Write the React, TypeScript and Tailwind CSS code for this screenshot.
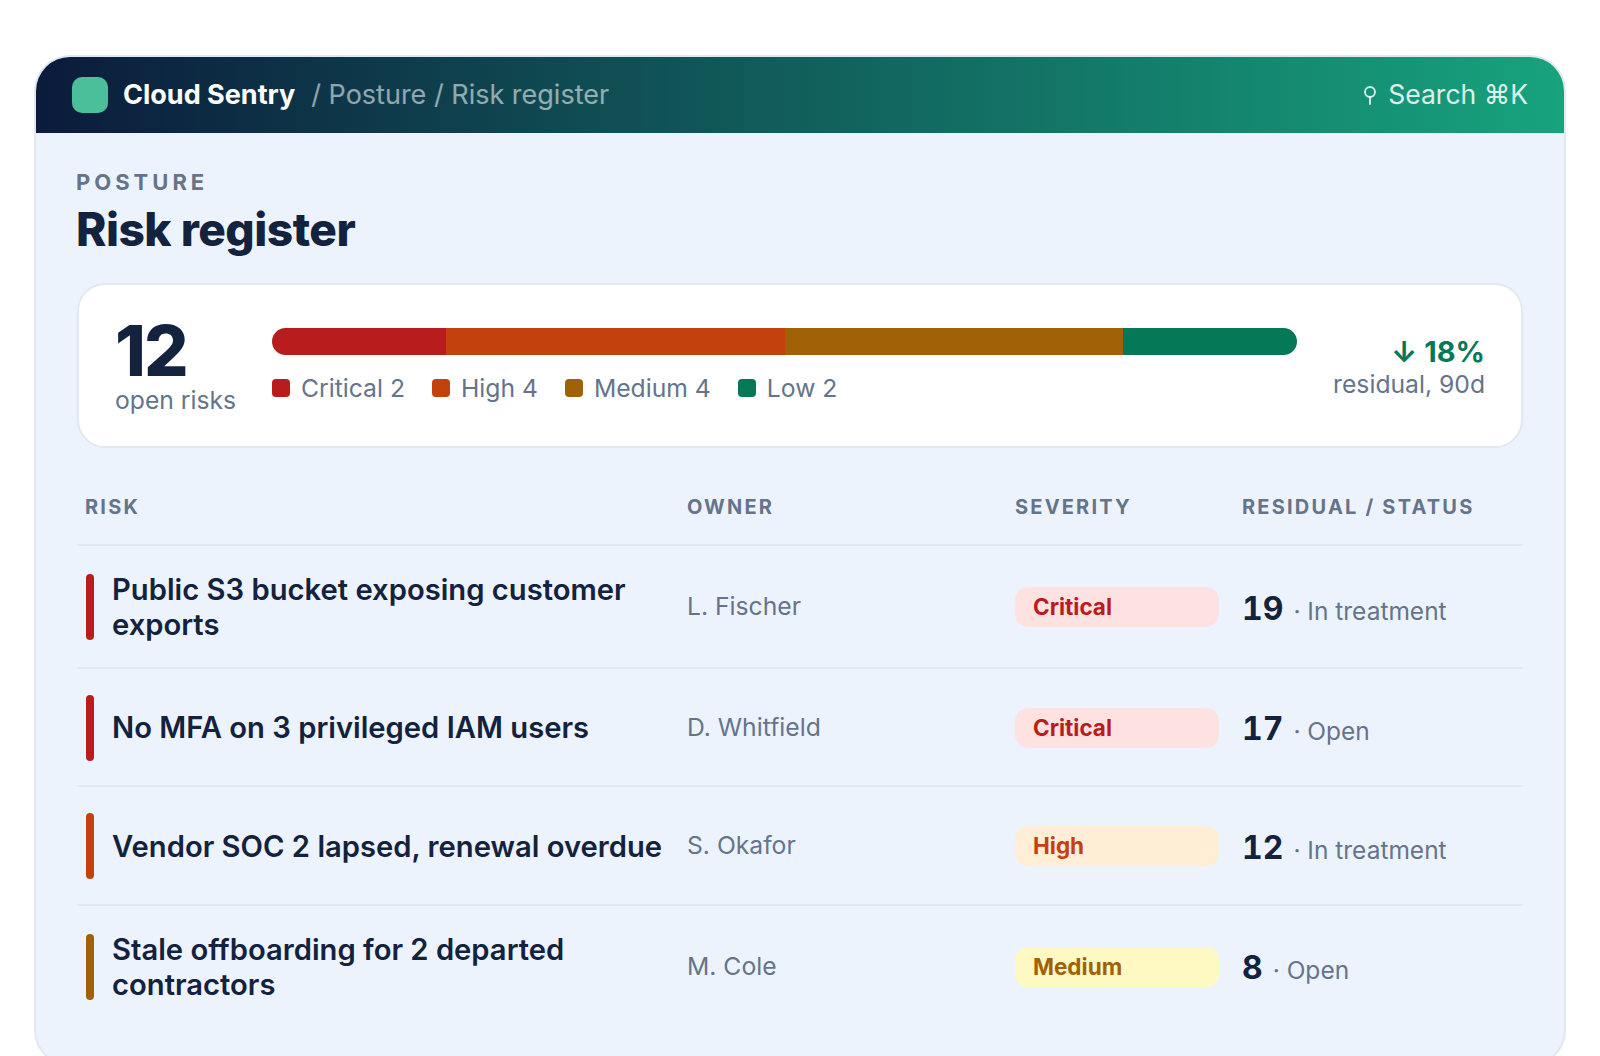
import React from "react";

const risks = [
  { title: ["Public S3 bucket exposing customer", "exports"], owner: "L. Fischer", sev: "Critical", score: "19", status: "In treatment", bar: "bg-[#b91c1c]", badge: "bg-[#fee2e2] text-[#b91c1c]" },
  { title: ["No MFA on 3 privileged IAM users"], owner: "D. Whitfield", sev: "Critical", score: "17", status: "Open", bar: "bg-[#b91c1c]", badge: "bg-[#fee2e2] text-[#b91c1c]" },
  { title: ["Vendor SOC 2 lapsed, renewal overdue"], owner: "S. Okafor", sev: "High", score: "12", status: "In treatment", bar: "bg-[#c2410c]", badge: "bg-[#ffedd5] text-[#c2410c]" },
  { title: ["Stale offboarding for 2 departed", "contractors"], owner: "M. Cole", sev: "Medium", score: "8", status: "Open", bar: "bg-[#a16207]", badge: "bg-[#fef9c3] text-[#a16207]" },
];

const legend = [
  { label: "Critical 2", c: "bg-[#b91c1c]" },
  { label: "High 4", c: "bg-[#c2410c]" },
  { label: "Medium 4", c: "bg-[#a16207]" },
  { label: "Low 2", c: "bg-[#047857]" },
];

const cols = "grid grid-cols-[602px_328px_227px_1fr]";

export default function App() {
  return (
    <div className="h-[1056px] overflow-hidden bg-white pt-[55px] px-[34px] font-['Inter',sans-serif]">
      <div className="h-[1011px] rounded-[36px] border-2 border-[#e2e8f0] bg-[#edf3fc] overflow-hidden">
        <header className="flex h-[76px] items-center justify-between bg-linear-to-r/srgb from-[#0b1b3b] to-[#17a37d] px-[36px]">
          <div className="flex items-center">
            <div className="h-[36px] w-[36px] rounded-[10px] bg-[#4abf9a]" />
            <span className="ml-[15px] text-[27px] font-bold text-white">Cloud Sentry</span>
            <span className="ml-[16px] text-[27px] text-white/55">/ Posture / Risk register</span>
          </div>
          <div className="flex items-center gap-[11px] text-[26.5px] text-white/85">
            <svg width="14" height="19" viewBox="0 0 14 19" fill="none" stroke="currentColor" strokeWidth="1.8" strokeLinecap="round">
              <circle cx="7" cy="6" r="5" />
              <path d="M7 11v7" />
            </svg>
            <span>Search ⌘K</span>
          </div>
        </header>
        <main className="px-[41px] pt-[35px]">
          <div className="-ml-[1px] text-[22px] font-bold leading-[28px] tracking-[4px] text-[#64748b]">POSTURE</div>
          <h1 className="-ml-[1px] mt-[5px] text-[46px] font-extrabold leading-[56px] tracking-[-0.5px] text-[#13223d]">Risk register</h1>
          <section className="mt-[26px] flex h-[165px] items-start rounded-[28px] border-2 border-[#e2e8f0] bg-white px-[36px] pt-[27px]">
            <div className="w-[157px] shrink-0">
              <div className="mt-[4px] text-[70px] font-extrabold leading-[69px] tracking-[-2px] text-[#13223d]">12</div>
              <div className="text-[24.7px] leading-[30px] text-[#64748b]">open risks</div>
            </div>
            <div className="mt-[16px] w-[1025px] shrink-0">
              <div className="flex h-[27px] overflow-hidden rounded-full">
                <div className="w-[17%] bg-[#b91c1c]" />
                <div className="w-[33%] bg-[#c2410c]" />
                <div className="w-[33%] bg-[#a16207]" />
                <div className="w-[17%] bg-[#047857]" />
              </div>
              <div className="mt-[18px] flex gap-[27px]">
                {legend.map((l) => (
                  <div key={l.label} className="flex items-center gap-[11px] text-[24.7px] leading-[30px] text-[#64748b]">
                    <span className={`h-[18px] w-[18px] rounded-[4px] ${l.c}`} />
                    {l.label}
                  </div>
                ))}
              </div>
            </div>
            <div className="ml-auto mt-[23px] text-right">
              <div className="text-[29px] font-bold leading-[34px] text-[#047857]">↓ 18%</div>
              <div className="text-[24.7px] leading-[30px] text-[#64748b]">residual, 90d</div>
            </div>
          </section>
          <div className={`${cols} mt-[45px] h-[53px] border-b-2 border-[#e2e8f0] text-[20px] font-bold leading-[28px] tracking-[2.2px] text-[#64748b]`}>
            <div className="pl-[8px]">RISK</div>
            <div className="pl-[8px]">OWNER</div>
            <div className="pl-[8px]">SEVERITY</div>
            <div className="pl-[8px]">RESIDUAL / STATUS</div>
          </div>
          {risks.map((r, i) => (
            <div key={r.owner} className={`${cols} items-center ${i < 3 ? "border-b-2 border-[#e2e8f0]" : ""} pt-[26px] pb-[24.5px]`}>
              <div className="flex items-center gap-[18px] pl-[9px]">
                <span className={`h-[66px] w-[8px] shrink-0 rounded-full ${r.bar}`} />
                <div className="text-[29.2px] font-semibold leading-[35px] text-[#13223d]">
                  {r.title.map((t) => (
                    <div key={t} className="whitespace-nowrap">{t}</div>
                  ))}
                </div>
              </div>
              <div className="pl-[8px] text-[24.7px] text-[#64748b]">{r.owner}</div>
              <div className="pl-[8px] pr-[15px]">
                <div className={`flex h-[40px] items-center rounded-[13px] px-[18px] text-[22.5px] font-bold ${r.badge}`}>{r.sev}</div>
              </div>
              <div className="pl-[8px] pt-[3px]">
                <span className="text-[32px] font-bold tabular-nums text-[#13223d]">{r.score}</span>
                <span className="ml-[10px] text-[24.5px] text-[#64748b]">· {r.status}</span>
              </div>
            </div>
          ))}
        </main>
      </div>
    </div>
  );
}
